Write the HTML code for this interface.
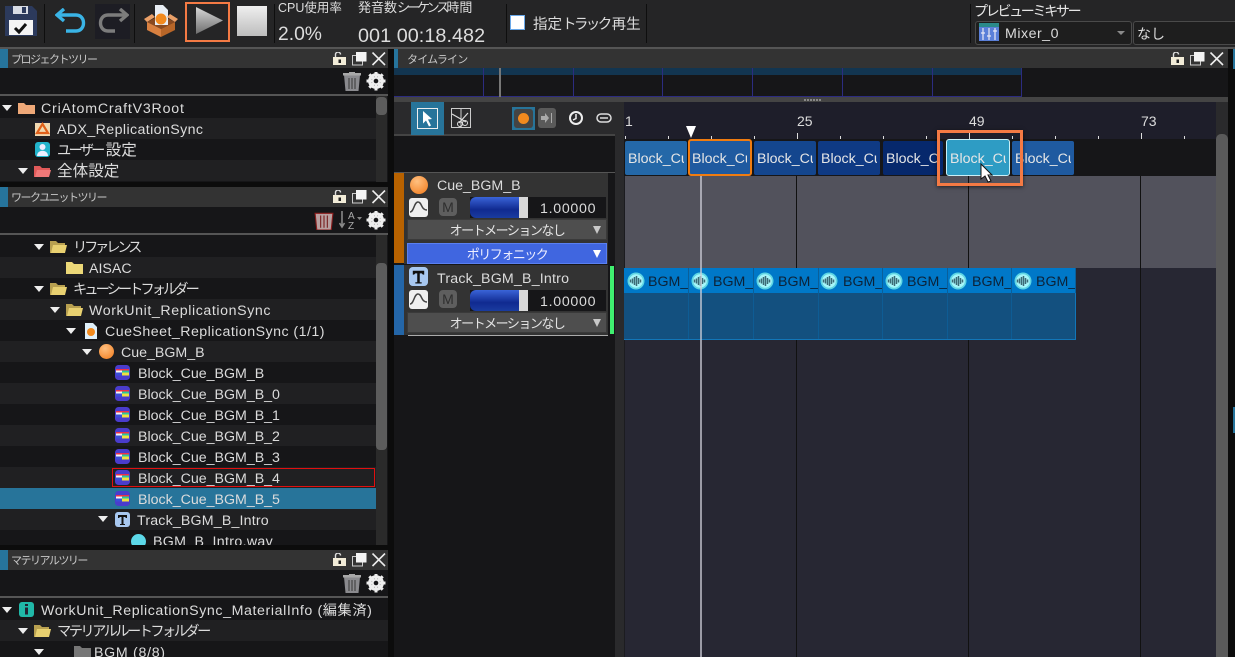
<!DOCTYPE html>
<html lang="ja"><head><meta charset="utf-8"><title>Atom Craft</title>
<style>
html,body{margin:0;padding:0;width:1235px;height:657px;overflow:hidden;background:#0c0c0c}
body{position:relative;font-family:"Liberation Sans","Noto Sans CJK JP",sans-serif;color:#dcdcdc}
.a,.t,svg{position:absolute}
.t{white-space:nowrap;line-height:20px;font-size:14.2px;margin-top:1px}
.h{font-size:11px;letter-spacing:-1.5px;color:#c8c8c8}
.k{letter-spacing:-2.7px}
.j{font-size:15.6px}
.row{position:absolute;left:0;width:376px;height:21px}
.o{background:#161618}.e{background:#202022}
.b{position:absolute;top:141px;height:34px;box-sizing:border-box;overflow:hidden;border-radius:2px;font-size:14.2px;line-height:36px;color:#e6e6e6;text-indent:3px;white-space:nowrap}
.w{position:absolute;top:268px;height:25px;background:#0078c8;border-right:1px solid #0a5f9a;overflow:hidden;white-space:nowrap;color:#0c2238;font-size:14.2px;line-height:29px;text-indent:24px}
.wi{position:absolute;top:272px}
.dd{position:absolute;left:407px;width:200px;height:21px;background:#4e4e4e;border:1px solid #3a3a3a;box-sizing:border-box;text-align:center;font-size:13px;letter-spacing:-1.5px;line-height:22px;color:#e4e4e4;white-space:nowrap}
.dd i{position:absolute;right:5px;top:6px;border:4.5px solid transparent;border-top:8px solid #c8c8c8;border-bottom:0}
.tri{position:absolute;border-left:5px solid transparent;border-right:5px solid transparent;border-top:6px solid #eee}
.gl{position:absolute;width:1px;background:#111}
</style></head><body>

<svg width="0" height="0" style="left:0;top:0"><defs>
<g id="blk"><rect width="15" height="15" rx="3.500" fill="#4a3ccc"/><rect x="1" y="4" width="13" height="1.500" fill="#f03048"/><rect x="1" y="5.500" width="6" height="2" fill="#f4f4f4"/><rect x="7" y="5.500" width="7" height="2" fill="#28c8a0"/><rect x="1" y="7.500" width="6" height="3" fill="#3a50d8"/><rect x="7" y="7.500" width="7" height="3" fill="#f0e040"/></g>
<g id="win"><rect x="0" y="5" width="13" height="8" fill="#f2ecd8"/><path d="M2.500 5V2.500a2.500 2.500 0 0 1 5 0" fill="none" stroke="#ddd" stroke-width="1.400"/><rect x="5.500" y="7.500" width="2.500" height="3.500" fill="#222"/><path d="M19.500 3.500h10v9.500h-10z" fill="#333" stroke="#ccc"/><rect x="23" y="0" width="10.500" height="9.500" fill="#f4f4f4"/><path d="M39.500 .5l12.500 12.500M52 .5L39.500 13" stroke="#eee" stroke-width="1.600"/></g>
<g id="tool"><path d="M1 3h16l-1.500 16h-13z" fill="#8a8a8e"/><rect x="0" y="1" width="18" height="2.500" fill="#a8a8a8"/><rect x="6" y="0" width="6" height="2" fill="#a8a8a8"/><path d="M6 6v11M9 6v11M12 6v11" stroke="#444" stroke-width="1.200"/><g transform="translate(33 9)"><circle r="6.300" fill="none" stroke="#eee" stroke-width="3.200"/><path d="M0-9.500v19M-9.500 0h19M-6.700-6.700l13.400 13.400M6.700-6.700l-13.400 13.400" stroke="#eee" stroke-width="3"/><circle r="2.300" fill="#161618"/></g></g>
<g id="wave"><circle cx="9" cy="9" r="8.500" fill="#5fd6e4"/><circle cx="9" cy="9" r="6.800" fill="#a6f6fa"/><path d="M3.500 7.500v3M5.500 6.500v5M7.500 5v8M9.500 4v10M11.500 6v6M13.500 7.500v3" stroke="#3c6a76" stroke-width="1.500"/></g>
</defs></svg>

<!-- top toolbar -->
<div class="a" style="left:0;top:0;width:1235px;height:47px;background:#252526"></div>
<div class="a" style="left:0;top:47px;width:1235px;height:2px;background:#555"></div>
<div class="a" style="left:44px;top:4px;width:1px;height:39px;background:#0e0e0e"></div>
<div class="a" style="left:134px;top:4px;width:1px;height:39px;background:#0e0e0e"></div>
<div class="a" style="left:274px;top:4px;width:1px;height:39px;background:#0e0e0e"></div>
<div class="a" style="left:506px;top:4px;width:1px;height:39px;background:#0e0e0e"></div>
<div class="a" style="left:646px;top:4px;width:1px;height:39px;background:#0e0e0e"></div>
<div class="a" style="left:970px;top:4px;width:1px;height:39px;background:#0e0e0e"></div>

<svg style="left:5px;top:6px" width="32" height="30" viewBox="0 0 32 30"><path d="M0 0H27L32 5V30H0Z" fill="#2c3a5c"/><rect x="8" y="0" width="15" height="8" fill="#d8dce4"/><rect x="17" y="1" width="4" height="6" fill="#2c3a5c"/><rect x="4" y="14" width="24" height="15" fill="#f4f4f4"/><path d="M10 22l4 4 7-8" fill="none" stroke="#111" stroke-width="3"/></svg>
<svg style="left:55px;top:8px" width="32" height="26" viewBox="0 0 32 26"><path d="M2 7H21C31 7 31 23 21 23H11" fill="none" stroke="#3ab4e6" stroke-width="3.400"/><path d="M9 1L2 7l7 6" fill="none" stroke="#3ab4e6" stroke-width="3.400"/></svg>
<div class="a" style="left:95px;top:4px;width:35px;height:35px;background:#1d1d24"></div>
<svg style="left:97px;top:8px" width="32" height="26" viewBox="0 0 32 26"><path d="M30 7H11C1 7 1 23 11 23H18" fill="none" stroke="#7c7c7c" stroke-width="3.400"/><path d="M23 1L30 7l-7 6" fill="none" stroke="#7c7c7c" stroke-width="3.400"/></svg>
<svg style="left:144px;top:5px" width="34" height="32" viewBox="0 0 34 32"><path d="M3 17L17 10 31 17 17 24Z" fill="#8a4a20"/><path d="M11 0h8l5 5v15H11z" fill="#e8eef4"/><circle cx="17" cy="14" r="5.500" fill="#f28a1e"/><path d="M3 17L17 24V32L3 25Z" fill="#d88040"/><path d="M31 17L17 24V32L31 25Z" fill="#b86628"/><path d="M0 14L8 9 11 12 3 17ZM34 14L26 9 23 12 31 17Z" fill="#eaa068"/></svg>
<div class="a" style="left:185px;top:2px;width:41px;height:36px;border:2.500px solid #f47a44;background:#252526"></div>
<svg style="left:196px;top:7px" width="28" height="27" viewBox="0 0 28 27"><defs><linearGradient id="g" x1="0" x2="0" y1="0" y2="1"><stop offset="0" stop-color="#d8d8d8"/><stop offset="1" stop-color="#6e6e6e"/></linearGradient></defs><path d="M0 0L27 13.500 0 27Z" fill="url(#g)"/></svg>
<div class="a" style="left:237px;top:6px;width:30px;height:30px;background:linear-gradient(#efefef,#bdbdbd)"></div>

<div class="t" style="left:278px;top:-3px;font-size:12.500px">CPU使用率</div>
<div class="t" style="left:278px;top:24px;font-size:19.300px">2.0%</div>
<div class="t" style="left:358px;top:-3px;font-size:13px">発音数<span style="letter-spacing:-3px">シーケンス</span>時間</div>
<div class="t" style="left:358px;top:25px;font-size:19.800px;letter-spacing:.05px">001 00:18.482</div>
<div class="a" style="left:510px;top:15px;width:13px;height:13px;background:#fff;border:1.500px solid #6aa8e8"></div>
<div class="t" style="left:533px;top:14px;font-size:14.500px">指定<span style="letter-spacing:-2.600px;margin-right:2px">トラック</span>再生</div>
<div class="t" style="left:974px;top:0px;font-size:14px;color:#e6e6e6;letter-spacing:-2.300px">プレビューミキサー</div>
<div class="a" style="left:975px;top:21px;width:155px;height:22px;border:1px solid #4a4a4a;border-radius:3px;background:#1e1e1e"></div>
<svg style="left:979px;top:23px" width="20" height="18" viewBox="0 0 20 18"><rect width="20" height="18" fill="#5a7fd8"/><rect width="20" height="4" fill="#2a8a8a"/><path d="M4 5v12M10 5v12M16 5v12M2 10h4M8 13h4M14 8h4" stroke="#e8e8f4" stroke-width="1.200"/></svg>
<div class="t" style="left:1005px;top:23px;font-size:14.200px;letter-spacing:.5px">Mixer_0</div>
<div class="tri" style="left:1117px;top:31px;border-top-color:#8a8a8a;border-left-width:4px;border-right-width:4px;border-top-width:4px"></div>
<div class="a" style="left:1133px;top:21px;width:110px;height:22px;border:1px solid #4a4a4a;border-radius:3px;background:#1e1e1e"></div>
<div class="t" style="left:1137px;top:23px;font-size:14px">なし</div>

<!-- left panels background -->
<div class="a" style="left:0;top:49px;width:388px;height:608px;background:#0c0c0c"></div>

<!-- PANEL 1 -->
<div class="a" style="left:0;top:49px;width:388px;height:19px;background:#333"></div>
<div class="a" style="left:0;top:49px;width:8px;height:19px;background:#26749c"></div>
<div class="t h" style="left:11px;top:49px">プロジェクトツリー</div>
<div class="a" style="left:0;top:68px;width:388px;height:26px;background:#161618"></div>
<div class="a" style="left:0;top:94px;width:388px;height:2px;background:#555"></div>
<div class="a" style="left:0;top:96px;width:388px;height:86px;background:#161618"></div>
<div class="row e" style="top:118px"></div><div class="row e" style="top:160px"></div>
<div class="a" style="left:376px;top:96px;width:11px;height:86px;background:#2a2a2a"></div>
<div class="a" style="left:376px;top:97px;width:11px;height:18px;border-radius:4px;background:#5c5c5c"></div>
<div class="tri" style="left:2px;top:105px"></div>
<svg style="left:18px;top:102px" width="17" height="12" viewBox="0 0 17 12"><path d="M0 1h6l2 2h9v9H0z" fill="#eea878"/></svg>
<div class="t" style="left:41px;top:98px;letter-spacing:.8px">CriAtomCraftV3Root</div>
<svg style="left:35px;top:121px" width="15" height="15" viewBox="0 0 15 15"><rect width="15" height="15" fill="#f0d8b0"/><rect width="15" height="2" fill="#223"/><path d="M7.500 3L13 12H2z" fill="none" stroke="#e0601a" stroke-width="2.200"/></svg>
<div class="t" style="left:57px;top:119px;letter-spacing:.4px">ADX_ReplicationSync</div>
<svg style="left:35px;top:142px" width="15" height="15" viewBox="0 0 15 15"><rect width="15" height="15" rx="3" fill="#22b4cc"/><circle cx="7.500" cy="5" r="3" fill="#eef"/><path d="M2 14c0-7 11-7 11 0z" fill="#eef"/></svg>
<div class="t" style="left:57px;top:140px"><span class="k">ユーザー</span><span class="j" style="margin-left:3px">設定</span></div>
<div class="tri" style="left:18px;top:168px"></div>
<svg style="left:34px;top:165px" width="17" height="12" viewBox="0 0 17 12"><path d="M0 1h6l2 2h8v2H4L2 12H0z" fill="#e05a5a"/><path d="M3 5h14l-2 7H1z" fill="#f07878"/></svg>
<div class="t j" style="left:57px;top:161px">全体設定</div>

<!-- PANEL 2 -->
<div class="a" style="left:0;top:187px;width:388px;height:20px;background:#333"></div>
<div class="a" style="left:0;top:187px;width:8px;height:20px;background:#26749c"></div>
<div class="t h" style="left:11px;top:187px">ワークユニットツリー</div>
<div class="a" style="left:0;top:207px;width:388px;height:26px;background:#161618"></div>
<div class="a" style="left:0;top:233px;width:388px;height:2px;background:#555"></div>
<div class="a" style="left:0;top:235px;width:388px;height:310px;background:#161618"></div>
<div class="row e" style="top:257px"></div><div class="row e" style="top:299px"></div><div class="row e" style="top:341px"></div><div class="row e" style="top:383px"></div><div class="row e" style="top:425px"></div><div class="row e" style="top:467px"></div><div class="row" style="top:488px;background:#27749a"></div><div class="row e" style="top:509px"></div>
<div class="a" style="left:376px;top:235px;width:11px;height:310px;background:#2a2a2a"></div>
<div class="a" style="left:376px;top:263px;width:11px;height:187px;border-radius:4px;background:#5c5c5c"></div>

<div class="tri" style="left:34px;top:244px"></div>
<svg style="left:50px;top:241px" width="17" height="12" viewBox="0 0 17 12"><path d="M0 0h6l2 2h7v2H4L2 12H0z" fill="#b8a050"/><path d="M3 4h14l-2 8H1z" fill="#e8d070"/></svg>
<div class="t k" style="left:73px;top:237px;letter-spacing:-3.100px">リファレンス</div>
<svg style="left:66px;top:262px" width="17" height="12" viewBox="0 0 17 12"><path d="M0 0h6l2 2h9v10H0z" fill="#ecd878"/></svg>
<div class="t" style="left:89px;top:258px">AISAC</div>
<div class="tri" style="left:34px;top:286px"></div>
<svg style="left:50px;top:283px" width="17" height="12" viewBox="0 0 17 12"><path d="M0 0h6l2 2h7v2H4L2 12H0z" fill="#b8a050"/><path d="M3 4h14l-2 8H1z" fill="#e8d070"/></svg>
<div class="t k" style="left:73px;top:279px;letter-spacing:-2.900px">キューシートフォルダー</div>
<div class="tri" style="left:50px;top:307px"></div>
<svg style="left:66px;top:304px" width="17" height="12" viewBox="0 0 17 12"><path d="M0 0h6l2 2h7v2H4L2 12H0z" fill="#b8a050"/><path d="M3 4h14l-2 8H1z" fill="#e8d070"/></svg>
<div class="t" style="left:89px;top:300px;letter-spacing:.6px">WorkUnit_ReplicationSync</div>
<div class="tri" style="left:66px;top:328px"></div>
<svg style="left:85px;top:323px" width="12" height="16" viewBox="0 0 12 16"><path d="M0 0h8l4 4v12H0z" fill="#dff0fa"/><circle cx="6" cy="9" r="4" fill="#f28a1e"/></svg>
<div class="t" style="left:105px;top:321px;letter-spacing:.47px">CueSheet_ReplicationSync (1/1)</div>
<div class="tri" style="left:82px;top:349px"></div>
<div class="a" style="left:99px;top:344px;width:15px;height:15px;border-radius:50%;background:radial-gradient(circle at 40% 30%,#ffc080,#f27a1a)"></div>
<div class="t" style="left:121px;top:342px">Cue_BGM_B</div>

<svg style="left:115px;top:365px" width="15" height="15"><use href="#blk"/></svg><div class="t" style="left:138px;top:363px">Block_Cue_BGM_B</div>
<svg style="left:115px;top:386px" width="15" height="15"><use href="#blk"/></svg><div class="t" style="left:138px;top:384px">Block_Cue_BGM_B_0</div>
<svg style="left:115px;top:407px" width="15" height="15"><use href="#blk"/></svg><div class="t" style="left:138px;top:405px">Block_Cue_BGM_B_1</div>
<svg style="left:115px;top:428px" width="15" height="15"><use href="#blk"/></svg><div class="t" style="left:138px;top:426px">Block_Cue_BGM_B_2</div>
<svg style="left:115px;top:449px" width="15" height="15"><use href="#blk"/></svg><div class="t" style="left:138px;top:447px">Block_Cue_BGM_B_3</div>
<div class="a" style="left:112px;top:468px;width:261px;height:17px;border:1px solid #e01010"></div>
<svg style="left:115px;top:470px" width="15" height="15"><use href="#blk"/></svg><div class="t" style="left:138px;top:468px">Block_Cue_BGM_B_4</div>
<svg style="left:115px;top:491px" width="15" height="15"><use href="#blk"/></svg><div class="t" style="left:138px;top:489px">Block_Cue_BGM_B_5</div>
<div class="tri" style="left:98px;top:516px"></div>
<svg style="left:115px;top:512px" width="15" height="15" viewBox="0 0 15 15"><rect width="15" height="15" rx="3" fill="#a8c8f0"/><path d="M3 3h9v3h-1l-1-1H8.500v7H10v1H5v-1h1.500V5H5L4 6H3z" fill="#111"/></svg>
<div class="t" style="left:137px;top:510px;letter-spacing:.18px">Track_BGM_B_Intro</div>
<div class="a" style="left:0;top:531px;width:376px;height:14px;overflow:hidden">
<div class="a" style="left:131px;top:3px;width:15px;height:15px;border-radius:50%;background:#5cd8e8"></div>
<div class="t" style="left:153px;top:0px;letter-spacing:.33px">BGM_B_Intro.wav</div></div>

<!-- PANEL 3 -->
<div class="a" style="left:0;top:550px;width:388px;height:20px;background:#333"></div>
<div class="a" style="left:0;top:550px;width:8px;height:20px;background:#26749c"></div>
<div class="t h" style="left:11px;top:550px">マテリアルツリー</div>
<div class="a" style="left:0;top:570px;width:388px;height:26px;background:#161618"></div>
<div class="a" style="left:0;top:596px;width:388px;height:2px;background:#555"></div>
<div class="a" style="left:0;top:598px;width:388px;height:59px;background:#161618"></div>
<div class="row e" style="top:620px;width:388px"></div>
<div class="tri" style="left:2px;top:607px"></div>
<svg style="left:19px;top:602px" width="15" height="15" viewBox="0 0 15 15"><rect width="15" height="15" rx="3" fill="#20b8a8"/><rect x="6" y="2" width="3" height="2" fill="#223"/><rect x="6" y="5.500" width="3" height="7" fill="#223"/></svg>
<div class="t" style="left:41px;top:600px;letter-spacing:.6px">WorkUnit_ReplicationSync_MaterialInfo (編集済)</div>
<div class="tri" style="left:18px;top:628px"></div>
<svg style="left:34px;top:625px" width="17" height="12" viewBox="0 0 17 12"><path d="M0 0h6l2 2h7v2H4L2 12H0z" fill="#b8a050"/><path d="M3 4h14l-2 8H1z" fill="#e8d070"/></svg>
<div class="t k" style="left:57px;top:621px;letter-spacing:-2.500px">マテリアルルートフォルダー</div>
<div class="a" style="left:0;top:642px;width:388px;height:15px;overflow:hidden">
<div class="tri" style="left:34px;top:7px"></div>
<svg style="left:74px;top:4px" width="17" height="12" viewBox="0 0 17 12"><path d="M0 0h6l2 2h9v10H0z" fill="#777"/></svg>
<div class="t" style="left:94px;top:0px;letter-spacing:.7px">BGM (8/8)</div></div>

<!-- panel icons -->
<svg style="left:333px;top:52px" width="53" height="14"><use href="#win"/></svg>
<svg style="left:343px;top:72px" width="44" height="20"><use href="#tool"/></svg>
<svg style="left:333px;top:190px" width="53" height="14"><use href="#win"/></svg>
<svg style="left:314px;top:210px" width="20" height="20" viewBox="0 0 18 18"><path d="M1 3h16l-1.500 15h-13z" fill="#b8a0a0" stroke="#8a1c1c"/><path d="M6 5v11M9 5v11M12 5v11" stroke="#7a2020"/></svg>
<svg style="left:339px;top:210px" width="24" height="20" viewBox="0 0 24 20"><path d="M3 1v15M0.500 13L3 17l2.500-4" fill="none" stroke="#888" stroke-width="1.600"/><text x="9" y="9" font-size="10" fill="#aaa" font-family="Liberation Sans">A</text><text x="9" y="19" font-size="10" fill="#aaa" font-family="Liberation Sans">Z</text><path d="M18 7h5l-2.500 3z" fill="#888"/></svg>
<svg style="left:343px;top:211px;clip-path:inset(0 0 0 22px)" width="44" height="20"><use href="#tool"/></svg>
<svg style="left:333px;top:553px" width="53" height="14"><use href="#win"/></svg>
<svg style="left:343px;top:574px" width="44" height="20"><use href="#tool"/></svg>

<!-- TIMELINE -->
<div class="a" style="left:394px;top:49px;width:834px;height:19px;background:#333"></div>
<div class="a" style="left:394px;top:49px;width:4px;height:19px;background:#26749c"></div>
<div class="t h" style="left:407px;top:49px;letter-spacing:-.8px">タイムライン</div>
<svg style="left:1171px;top:52px" width="53" height="14"><use href="#win"/></svg>
<div class="a" style="left:394px;top:68px;width:834px;height:29px;background:#161618"></div>
<div class="a" style="left:394px;top:68px;width:627px;height:7px;background:#123550"></div>
<div class="a" style="left:1021px;top:68px;width:1px;height:29px;background:#2c2c80"></div>
<div class="a" style="left:394px;top:96px;width:627px;height:1px;background:#2c2c80"></div>
<div class="a" style="left:483px;top:68px;width:1px;height:29px;background:#2c2c80"></div>
<div class="a" style="left:573px;top:68px;width:1px;height:29px;background:#2c2c80"></div>
<div class="a" style="left:662px;top:68px;width:1px;height:29px;background:#2c2c80"></div>
<div class="a" style="left:752px;top:68px;width:1px;height:29px;background:#2c2c80"></div>
<div class="a" style="left:842px;top:68px;width:1px;height:29px;background:#2c2c80"></div>
<div class="a" style="left:932px;top:68px;width:1px;height:29px;background:#2c2c80"></div>
<div class="a" style="left:499px;top:68px;width:2px;height:30px;background:#777"></div>
<div class="a" style="left:394px;top:97px;width:834px;height:5px;background:#444"></div>
<div class="a" style="left:804px;top:99px;width:17px;height:2px;background:repeating-linear-gradient(90deg,#888 0 2px,transparent 2px 3px)"></div>

<!-- left tracks col -->
<div class="a" style="left:394px;top:102px;width:221px;height:555px;background:#161618"></div>
<div class="a" style="left:394px;top:102px;width:221px;height:33px;background:#2a2a2c"></div>
<div class="a" style="left:394px;top:134px;width:221px;height:2px;background:#444"></div>
<div class="a" style="left:411px;top:102px;width:33px;height:33px;background:#27749a"></div>
<svg style="left:417px;top:108px" width="21" height="21" viewBox="0 0 21 21"><rect x=".5" y=".5" width="20" height="20" fill="none" stroke="#eee"/><path d="M6 3l9 8-4 .5 3 6-2 1-3-6-3 3z" fill="#fff"/></svg>
<svg style="left:451px;top:108px" width="20" height="20" viewBox="0 0 20 20"><rect x=".5" y=".5" width="19" height="19" fill="none" stroke="#ccc"/><path d="M10 0v20" stroke="#ccc"/><path d="M1 6l14 8M17 5L8 15" stroke="#ddd" stroke-width="1.200"/><circle cx="14" cy="15" r="2.500" fill="none" stroke="#ddd"/><circle cx="9" cy="16" r="2.500" fill="none" stroke="#ddd"/></svg>
<div class="a" style="left:512px;top:107px;width:23px;height:23px;background:#27749a"></div>
<div class="a" style="left:514px;top:109px;width:19px;height:19px;border-radius:3px;background:#444"></div>
<div class="a" style="left:518px;top:113px;width:11px;height:11px;border-radius:50%;background:#f28a1e"></div>
<div class="a" style="left:538px;top:108px;width:18px;height:20px;border-radius:3px;background:#5a5a5a"></div>
<svg style="left:541px;top:113px" width="12" height="10" viewBox="0 0 12 10"><path d="M0 3h4V0l4 5-4 5V7H0z" fill="#aaa"/><path d="M10.500 0v10" stroke="#aaa"/></svg>
<svg style="left:568px;top:110px" width="16" height="16" viewBox="0 0 16 16"><circle cx="8" cy="8" r="6" fill="none" stroke="#eee" stroke-width="2"/><path d="M8 4v4.500L5 10" fill="none" stroke="#eee" stroke-width="1.500"/></svg>
<svg style="left:596px;top:113px" width="16" height="10" viewBox="0 0 16 10"><rect x="1" y="1" width="14" height="8" rx="4" fill="none" stroke="#ddd" stroke-width="1.500"/><path d="M4 5h8" stroke="#ddd" stroke-width="1.500"/></svg>

<!-- cue row -->
<div class="a" style="left:394px;top:172px;width:221px;height:1px;background:#555"></div>
<div class="a" style="left:394px;top:173px;width:10px;height:90px;background:#b86200"></div>
<div class="a" style="left:404px;top:173px;width:204px;height:91px;background:#333"></div>
<div class="a" style="left:410px;top:176px;width:18px;height:18px;border-radius:50%;background:radial-gradient(circle at 40% 30%,#ffc080,#f27a1a)"></div>
<div class="t" style="left:437px;top:175px">Cue_BGM_B</div>
<svg style="left:409px;top:198px" width="19" height="19" viewBox="0 0 19 19"><rect width="19" height="19" rx="3" fill="#efefef"/><path d="M1 14c4 0 4-10 8-10s3 8 9 8" fill="none" stroke="#444" stroke-width="1.500"/></svg>
<div class="a" style="left:439px;top:198px;width:18px;height:18px;border-radius:4px;background:#5e5e5e;color:#2e2e2e;font-size:14px;line-height:18px;text-align:center">M</div>
<div class="a" style="left:470px;top:197px;width:136px;height:21px;background:#161618"></div>
<div class="a" style="left:470px;top:197px;width:49px;height:21px;border-radius:6px 0 0 6px;background:linear-gradient(#3a64d8,#102a90 60%,#1a3ca0)"></div>
<div class="a" style="left:519px;top:197px;width:9px;height:21px;background:#d8d8d8"></div>
<div class="t" style="left:540px;top:198px;letter-spacing:.7px">1.00000</div>
<div class="dd" style="top:219px">オートメーションなし<i></i></div>
<div class="dd" style="top:243px;background:#4066e0;border-color:#5a80f0;color:#eef">ポリフォニック<i style="border-top-color:#fff"></i></div>

<!-- track row -->
<div class="a" style="left:394px;top:265px;width:10px;height:70px;background:#2466a8"></div>
<div class="a" style="left:404px;top:265px;width:204px;height:70px;background:#333"></div>
<div class="a" style="left:408px;top:335px;width:200px;height:1px;background:#aaa"></div>
<div class="a" style="left:610px;top:266px;width:4px;height:68px;background:#40f070"></div>
<svg style="left:409px;top:267px" width="19" height="19" viewBox="0 0 15 15"><rect width="15" height="15" rx="3" fill="#a8c8f0"/><path d="M3 3h9v3h-1l-1-1H8.500v7H10v1H5v-1h1.500V5H5L4 6H3z" fill="#111"/></svg>
<div class="t" style="left:437px;top:268px;letter-spacing:.2px">Track_BGM_B_Intro</div>
<svg style="left:409px;top:290px" width="19" height="19" viewBox="0 0 19 19"><rect width="19" height="19" rx="3" fill="#efefef"/><path d="M1 14c4 0 4-10 8-10s3 8 9 8" fill="none" stroke="#444" stroke-width="1.500"/></svg>
<div class="a" style="left:439px;top:290px;width:18px;height:18px;border-radius:4px;background:#5e5e5e;color:#2e2e2e;font-size:14px;line-height:18px;text-align:center">M</div>
<div class="a" style="left:470px;top:290px;width:136px;height:21px;background:#161618"></div>
<div class="a" style="left:470px;top:290px;width:49px;height:21px;border-radius:6px 0 0 6px;background:linear-gradient(#3a64d8,#102a90 60%,#1a3ca0)"></div>
<div class="a" style="left:519px;top:290px;width:9px;height:21px;background:#d8d8d8"></div>
<div class="t" style="left:540px;top:291px;letter-spacing:.7px">1.00000</div>
<div class="dd" style="top:312px">オートメーションなし<i></i></div>
<div class="a" style="left:620px;top:448px;width:3px;height:18px;background:repeating-linear-gradient(#666 0 2px,transparent 2px 3px)"></div>

<!-- right grid -->
<div class="a" style="left:615px;top:102px;width:9px;height:555px;background:#2a2a2c"></div>
<div class="a" style="left:624px;top:102px;width:592px;height:37px;background:#1e1e2a"></div>
<div class="t" style="left:625px;top:110px;font-size:14px">1</div>
<div class="t" style="left:797px;top:110px;font-size:14px">25</div>
<div class="t" style="left:969px;top:110px;font-size:14px">49</div>
<div class="t" style="left:1141px;top:110px;font-size:14px">73</div>
<div class="a" style="left:625px;top:136px;width:591px;height:3px;background:repeating-linear-gradient(90deg,#ddd 0 1px,transparent 1px 43px)"></div>
<div class="a" style="left:797px;top:133px;width:1px;height:6px;background:#ddd"></div>
<div class="a" style="left:969px;top:133px;width:1px;height:6px;background:#ddd"></div>
<div class="a" style="left:1141px;top:133px;width:1px;height:6px;background:#ddd"></div>
<div class="a" style="left:686px;top:126px;width:0;height:0;border-left:5px solid transparent;border-right:5px solid transparent;border-top:12px solid #fff"></div>
<div class="a" style="left:624px;top:139px;width:592px;height:37px;background:#161618"></div>
<div class="a" style="left:624px;top:176px;width:592px;height:92px;background:#52525c"></div>
<div class="a" style="left:624px;top:268px;width:592px;height:389px;background:#272733"></div>
<div class="a" style="left:624px;top:176px;width:1px;height:481px;background:#1c1c20"></div>
<div class="gl" style="left:796px;top:176px;height:481px"></div>
<div class="gl" style="left:968px;top:176px;height:481px"></div>
<div class="gl" style="left:1140px;top:176px;height:481px"></div>

<div class="b" style="left:625px;width:62px;background:#2468a8;border-right:3px solid #2468a8">Block_Cu</div>
<div class="b" style="left:688px;top:139px;width:64px;height:37px;border:2px solid #f07c10;background:#1f5aa0;line-height:36px;text-indent:2px;border-radius:3px"><div style="overflow:hidden;width:57px">Block_Cu</div></div>
<div class="b" style="left:754px;width:62px;background:#14468e;border-right:3px solid #14468e">Block_Cu</div>
<div class="b" style="left:818px;width:62px;background:#0f3a84;border-right:3px solid #0f3a84">Block_Cu</div>
<div class="b" style="left:883px;width:60px;background:#06286c;border-right:3px solid #06286c">Block_Cu</div>
<div class="b" style="left:946px;top:139px;width:64px;height:37px;border:1px solid #c8f0f8;background:#2e9cc4;line-height:38px;text-indent:3px;border-radius:3px"><div style="overflow:hidden;width:59px">Block_Cu</div></div>
<div class="b" style="left:1012px;width:62px;background:#1f5aa0;border-right:3px solid #1f5aa0">Block_Cu</div>
<div class="a" style="left:937px;top:130px;width:80px;height:50px;border:3px solid #f47a44;box-shadow:0 1px 4px rgba(0,0,0,.6)"></div>
<svg style="left:980px;top:163px" width="13" height="20" viewBox="0 0 13 20"><path d="M1 1v15l4-3 3 6 3-1-3-6h4z" fill="#fff" stroke="#111"/></svg>

<!-- wave lane -->
<div class="a" style="left:624px;top:293px;width:452px;height:46px;background:#13507f"></div>
<div class="a" style="left:624px;top:339px;width:452px;height:1px;background:#1276b8"></div>
<div class="a" style="left:1075px;top:268px;width:1px;height:72px;background:#1276b8"></div>
<div class="a" style="left:688px;top:293px;width:1px;height:46px;background:#0e5c94"></div>
<div class="a" style="left:753px;top:293px;width:1px;height:46px;background:#0e5c94"></div>
<div class="a" style="left:818px;top:293px;width:1px;height:46px;background:#0e5c94"></div>
<div class="a" style="left:882px;top:293px;width:1px;height:46px;background:#0e5c94"></div>
<div class="a" style="left:947px;top:293px;width:1px;height:46px;background:#0e5c94"></div>
<div class="a" style="left:1011px;top:293px;width:1px;height:46px;background:#0e5c94"></div>
<div class="w" style="left:624px;width:64px">BGM_</div>
<div class="w" style="left:689px;width:64px">BGM_</div>
<div class="w" style="left:754px;width:64px">BGM_</div>
<div class="w" style="left:819px;width:63px">BGM_</div>
<div class="w" style="left:883px;width:64px">BGM_</div>
<div class="w" style="left:948px;width:63px">BGM_</div>
<div class="w" style="left:1012px;width:63px">BGM_</div>
<svg class="wi" style="left:627px" width="18" height="18"><use href="#wave"/></svg>
<svg class="wi" style="left:691px" width="18" height="18"><use href="#wave"/></svg>
<svg class="wi" style="left:756px" width="18" height="18"><use href="#wave"/></svg>
<svg class="wi" style="left:820px" width="18" height="18"><use href="#wave"/></svg>
<svg class="wi" style="left:885px" width="18" height="18"><use href="#wave"/></svg>
<svg class="wi" style="left:949px" width="18" height="18"><use href="#wave"/></svg>
<svg class="wi" style="left:1014px" width="18" height="18"><use href="#wave"/></svg>
<div class="a" style="left:700px;top:176px;width:2px;height:481px;background:rgba(205,205,215,.7)"></div>

<!-- scrollbar + right edge -->
<div class="a" style="left:1216px;top:102px;width:12px;height:555px;background:#2a2a2c"></div>
<div class="a" style="left:1216px;top:134px;width:12px;height:523px;border-radius:5px 5px 0 0;background:#5a5a5a"></div>
<div class="a" style="left:1228px;top:49px;width:7px;height:608px;background:#0c0c0c"></div>
<div class="a" style="left:1233px;top:49px;width:2px;height:20px;background:#26749c"></div>
<div class="a" style="left:1233px;top:407px;width:2px;height:26px;background:#26749c"></div>
</body></html>
